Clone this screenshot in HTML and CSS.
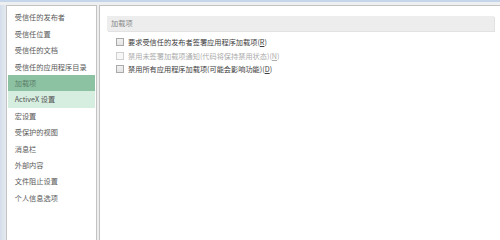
FILE: index.html
```html
<!DOCTYPE html>
<html lang="zh-CN">
<head>
<meta charset="utf-8">
<title>信任中心 - 加载项</title>
<link rel="stylesheet" href="styles.css">
</head>
<body>
<div class="window">
  <div class="topbar"></div>
  <div class="main">
    <div class="leftstrip"></div>
    <nav class="sidebar">
      <div class="item">受信任的发布者</div>
      <div class="item">受信任位置</div>
      <div class="item">受信任的文档</div>
      <div class="item">受信任的应用程序目录</div>
      <div class="item selected">加载项</div>
      <div class="item hover">ActiveX 设置</div>
      <div class="item">宏设置</div>
      <div class="item">受保护的视图</div>
      <div class="item">消息栏</div>
      <div class="item">外部内容</div>
      <div class="item">文件阻止设置</div>
      <div class="item">个人信息选项</div>
    </nav>
    <div class="gap"></div>
    <section class="panel">
      <div class="heading">加载项</div>
      <div class="options">
        <label class="row"><span class="box"></span><span class="label">要求受信任的发布者签署应用程序加载项(<u>R</u>)</span></label>
        <label class="row disabled"><span class="box"></span><span class="label">禁用未签署加载项通知(代码将保持禁用状态)(<u>N</u>)</span></label>
        <label class="row"><span class="box"></span><span class="label">禁用所有应用程序加载项(可能会影响功能)(<u>D</u>)</span></label>
      </div>
    </section>
  </div>
</div>
</body>
</html>
```

FILE: styles.css
```css
html, body {
  margin: 0;
  padding: 0;
  height: 100%;
  overflow: hidden;
}
body {
  background: #eeeeee;
  font-family: "Noto Sans CJK SC", "Noto Sans", sans-serif;
  font-size: 7.2px;
  color: #555;
}
.window {
  display: flex;
  flex-direction: column;
  height: 100vh;
  min-height: 224px;
}
.topbar {
  height: 2px;
  background: #c6d6ea;
  border-bottom: 3px solid #eeeff1;
  flex: none;
}
.main {
  flex: 1;
  display: flex;
  min-height: 0;
}
.leftstrip {
  width: 6px;
  flex: none;
  background: linear-gradient(to right, #d3deeb, #e6eaef);
}
.sidebar {
  width: 89px;
  flex: none;
  background: #fff;
  border: 1px solid #c3c3c3;
  border-bottom: none;
  padding-top: 3.4px;
}
.item {
  height: 16.4px;
  line-height: 16.4px;
  margin: 0 1px;
  padding-left: 6.7px;
  white-space: nowrap;
  color: #5a5a5a;
}
.item.selected {
  background: #8cc2a1;
  color: #5d7f6b;
}
.item.hover {
  background: #d5eedf;
  color: #555;
}
.gap {
  width: 2px;
  flex: none;
  background: #eeeeee;
}
.panel {
  flex: 1;
  background: #fff;
  border-left: 1px solid #c3c3c3;
  border-top: 1px solid #c3c3c3;
  padding: 10px 6px 0 7px;
}
.heading {
  height: 15px;
  line-height: 15px;
  background: #ededed;
  color: #888;
  padding-left: 4px;
  box-shadow: 1px 1px 0 #e2e2e2;
}
.options {
  display: flex;
  flex-direction: column;
  padding: 4.5px 0 0 9px;
}
.row {
  display: flex;
  align-items: center;
  height: 13.5px;
  color: #3c3c3c;
  white-space: nowrap;
}
.row.disabled {
  color: #ababab;
}
.box {
  width: 6px;
  height: 6px;
  border: 1px solid #aaaaaa;
  background: linear-gradient(#f1f1f1, #e4e4e4);
  margin-right: 4px;
  flex: none;
}
.row.disabled .box {
  border-color: #d0d0d0;
  background: #f7f7f7;
}
.label u {
  text-decoration: underline;
}
```
